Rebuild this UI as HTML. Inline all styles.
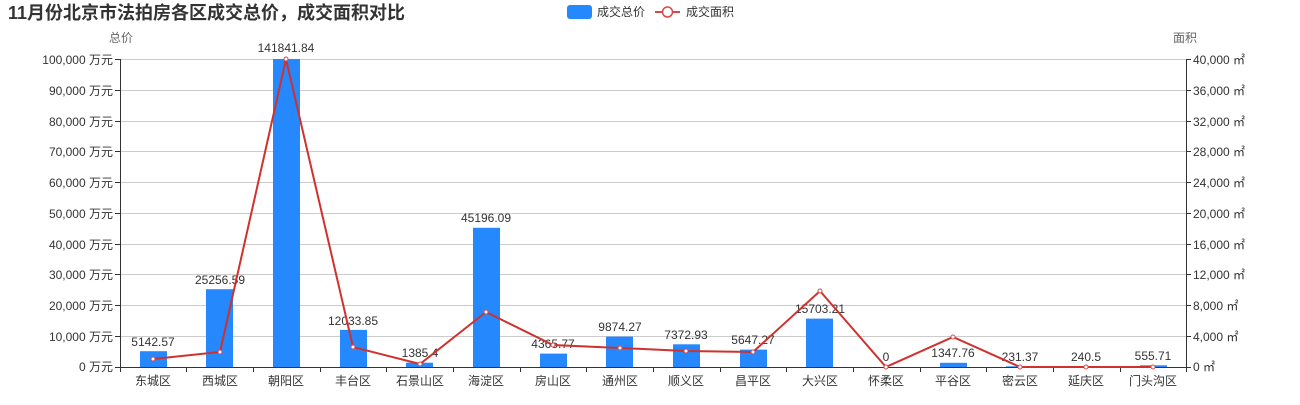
<!DOCTYPE html>
<html><head><meta charset="utf-8"><style>
body{margin:0;background:#fff;width:1300px;height:400px;overflow:hidden}
svg text{font-family:"Liberation Sans","Noto Sans CJK SC",sans-serif}
</style></head><body>
<svg width="1300" height="400" xmlns="http://www.w3.org/2000/svg">
<text x="8" y="19" font-size="18" font-weight="bold" fill="#333">11月份北京市法拍房各区成交总价，成交面积对比</text>
<rect x="567" y="5" width="25" height="14" rx="3" fill="#2688fd"/>
<text x="597" y="16" font-size="12" fill="#333">成交总价</text>
<line x1="655" y1="12" x2="680" y2="12" stroke="#d84a4a" stroke-width="2"/>
<circle cx="667.5" cy="12" r="5" fill="#fff" stroke="#d84a4a" stroke-width="1.5"/>
<text x="686" y="16" font-size="12" fill="#333">成交面积</text>
<text x="109" y="42" font-size="12" fill="#666">总价</text>
<text x="1173" y="42" font-size="12" fill="#666">面积</text>
<g stroke="#ccc" stroke-width="1">
<line x1="120" y1="59.5" x2="1186" y2="59.5"/><line x1="120" y1="90.5" x2="1186" y2="90.5"/><line x1="120" y1="121.5" x2="1186" y2="121.5"/><line x1="120" y1="151.5" x2="1186" y2="151.5"/><line x1="120" y1="182.5" x2="1186" y2="182.5"/><line x1="120" y1="213.5" x2="1186" y2="213.5"/><line x1="120" y1="244.5" x2="1186" y2="244.5"/><line x1="120" y1="274.5" x2="1186" y2="274.5"/><line x1="120" y1="305.5" x2="1186" y2="305.5"/><line x1="120" y1="336.5" x2="1186" y2="336.5"/>
</g>
<g font-size="12" fill="#333" text-anchor="end">
<text x="113" y="64">100,000 万元</text><text x="113" y="95">90,000 万元</text><text x="113" y="126">80,000 万元</text><text x="113" y="156">70,000 万元</text><text x="113" y="187">60,000 万元</text><text x="113" y="218">50,000 万元</text><text x="113" y="249">40,000 万元</text><text x="113" y="279">30,000 万元</text><text x="113" y="310">20,000 万元</text><text x="113" y="341">10,000 万元</text><text x="113" y="371">0 万元</text>
</g>
<g font-size="12" fill="#333">
<text x="1193" y="64">40,000 ㎡</text><text x="1193" y="95">36,000 ㎡</text><text x="1193" y="126">32,000 ㎡</text><text x="1193" y="156">28,000 ㎡</text><text x="1193" y="187">24,000 ㎡</text><text x="1193" y="218">20,000 ㎡</text><text x="1193" y="249">16,000 ㎡</text><text x="1193" y="279">12,000 ㎡</text><text x="1193" y="310">8,000 ㎡</text><text x="1193" y="341">4,000 ㎡</text><text x="1193" y="371">0 ㎡</text>
</g>
<g fill="#2688fd">
<rect x="140" y="351.2" width="27" height="15.8"/>
<rect x="206" y="289.2" width="27" height="77.8"/>
<rect x="273" y="59" width="27" height="308"/>
<rect x="340" y="329.9" width="27" height="37.1"/>
<rect x="406" y="362.7" width="27" height="4.3"/>
<rect x="473" y="227.8" width="27" height="139.2"/>
<rect x="540" y="353.6" width="27" height="13.4"/>
<rect x="606" y="336.6" width="27" height="30.4"/>
<rect x="673" y="344.3" width="27" height="22.7"/>
<rect x="740" y="349.6" width="27" height="17.4"/>
<rect x="806" y="318.6" width="27" height="48.4"/>
<rect x="940" y="362.8" width="27" height="4.2"/>
<rect x="1006" y="366.3" width="27" height="0.7"/>
<rect x="1073" y="366.3" width="27" height="0.7"/>
<rect x="1140" y="365.3" width="27" height="1.7"/>
</g>
<g stroke="#333" stroke-width="1">
<line x1="120.5" y1="59" x2="120.5" y2="367"/><line x1="1186.5" y1="59" x2="1186.5" y2="367"/>
<line x1="120" y1="367.5" x2="1186" y2="367.5"/>
<line x1="115" y1="59.5" x2="120" y2="59.5"/><line x1="115" y1="90.5" x2="120" y2="90.5"/><line x1="115" y1="121.5" x2="120" y2="121.5"/><line x1="115" y1="151.5" x2="120" y2="151.5"/><line x1="115" y1="182.5" x2="120" y2="182.5"/><line x1="115" y1="213.5" x2="120" y2="213.5"/><line x1="115" y1="244.5" x2="120" y2="244.5"/><line x1="115" y1="274.5" x2="120" y2="274.5"/><line x1="115" y1="305.5" x2="120" y2="305.5"/><line x1="115" y1="336.5" x2="120" y2="336.5"/><line x1="115" y1="367.5" x2="120" y2="367.5"/>
<line x1="1186" y1="59.5" x2="1191" y2="59.5"/><line x1="1186" y1="90.5" x2="1191" y2="90.5"/><line x1="1186" y1="121.5" x2="1191" y2="121.5"/><line x1="1186" y1="151.5" x2="1191" y2="151.5"/><line x1="1186" y1="182.5" x2="1191" y2="182.5"/><line x1="1186" y1="213.5" x2="1191" y2="213.5"/><line x1="1186" y1="244.5" x2="1191" y2="244.5"/><line x1="1186" y1="274.5" x2="1191" y2="274.5"/><line x1="1186" y1="305.5" x2="1191" y2="305.5"/><line x1="1186" y1="336.5" x2="1191" y2="336.5"/><line x1="1186" y1="367.5" x2="1191" y2="367.5"/>
<line x1="186.5" y1="367" x2="186.5" y2="372"/><line x1="253.5" y1="367" x2="253.5" y2="372"/><line x1="320.5" y1="367" x2="320.5" y2="372"/><line x1="386.5" y1="367" x2="386.5" y2="372"/><line x1="453.5" y1="367" x2="453.5" y2="372"/><line x1="520.5" y1="367" x2="520.5" y2="372"/><line x1="586.5" y1="367" x2="586.5" y2="372"/><line x1="653.5" y1="367" x2="653.5" y2="372"/><line x1="720.5" y1="367" x2="720.5" y2="372"/><line x1="786.5" y1="367" x2="786.5" y2="372"/><line x1="853.5" y1="367" x2="853.5" y2="372"/><line x1="920.5" y1="367" x2="920.5" y2="372"/><line x1="986.5" y1="367" x2="986.5" y2="372"/><line x1="1053.5" y1="367" x2="1053.5" y2="372"/><line x1="1120.5" y1="367" x2="1120.5" y2="372"/><line x1="120.5" y1="367" x2="120.5" y2="372"/><line x1="1186.5" y1="367" x2="1186.5" y2="372"/>
</g>
<g font-size="12" fill="#333" text-anchor="middle">
<text x="153" y="385">东城区</text><text x="220" y="385">西城区</text><text x="286" y="385">朝阳区</text><text x="353" y="385">丰台区</text><text x="420" y="385">石景山区</text><text x="486" y="385">海淀区</text><text x="553" y="385">房山区</text><text x="620" y="385">通州区</text><text x="686" y="385">顺义区</text><text x="753" y="385">昌平区</text><text x="820" y="385">大兴区</text><text x="886" y="385">怀柔区</text><text x="953" y="385">平谷区</text><text x="1020" y="385">密云区</text><text x="1086" y="385">延庆区</text><text x="1153" y="385">门头沟区</text>
</g>
<g font-size="12" fill="#333" text-anchor="middle">
<text x="153" y="346">5142.57</text><text x="220" y="284">25256.59</text><text x="286" y="52">141841.84</text><text x="353" y="325">12033.85</text><text x="420" y="357">1385.4</text><text x="486" y="222">45196.09</text><text x="553" y="348">4365.77</text><text x="620" y="331">9874.27</text><text x="686" y="339">7372.93</text><text x="753" y="344">5647.27</text><text x="820" y="313">15703.21</text><text x="886" y="361">0</text><text x="953" y="357">1347.76</text><text x="1020" y="361">231.37</text><text x="1086" y="361">240.5</text><text x="1153" y="360">555.71</text>
</g>
<polyline fill="none" stroke="#d0312d" stroke-width="2" points="153,359 220,352 286,59 353,347 420,364 486,312 553,345 620,348 686,351 753,352 820,291 886,367 953,337 1020,367 1086,367 1153,367"/>
<g fill="#fff" stroke="#d84a4a" stroke-width="1">
<circle cx="153" cy="359" r="2"/><circle cx="220" cy="352" r="2"/><circle cx="286" cy="59" r="2"/><circle cx="353" cy="347" r="2"/><circle cx="420" cy="364" r="2"/><circle cx="486" cy="312" r="2"/><circle cx="553" cy="345" r="2"/><circle cx="620" cy="348" r="2"/><circle cx="686" cy="351" r="2"/><circle cx="753" cy="352" r="2"/><circle cx="820" cy="291" r="2"/><circle cx="886" cy="367" r="2"/><circle cx="953" cy="337" r="2"/><circle cx="1020" cy="367" r="2"/><circle cx="1086" cy="367" r="2"/><circle cx="1153" cy="367" r="2"/>
</g>
</svg>
</body></html>
